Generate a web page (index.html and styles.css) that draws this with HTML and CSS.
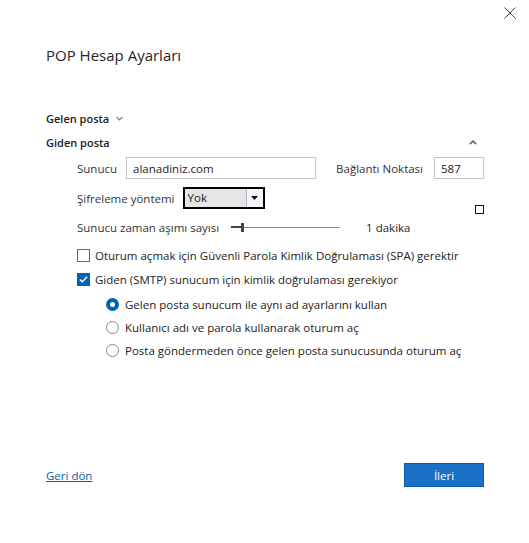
FILE: index.html
```html
<!DOCTYPE html>
<html lang="tr">
<head>
    <meta charset="UTF-8">
    <meta name="viewport" content="width=device-width, initial-scale=1.0">
    <title>POP Hesap Ayarları</title>
    <link rel="stylesheet" href="styles.css">
</head>
<body>
    <div class="dialog">
        <div class="topbar">
            <button class="close" aria-label="Kapat">
                <svg width="12" height="12" viewBox="0 0 12 12"><path d="M0.5 0.5 L11.5 11.5 M11.5 0.5 L0.5 11.5" stroke="#444" stroke-width="1" fill="none"/></svg>
            </button>
        </div>

        <div class="content">
            <h1 class="title">POP Hesap Ayarları</h1>

            <div class="section-head">
                <span>Gelen posta</span>
                <svg class="chev" width="7" height="5" viewBox="0 0 7 5"><path d="M0.5 0.8 L3.5 3.8 L6.5 0.8" stroke="#777" stroke-width="1.2" fill="none"/></svg>
            </div>
            <div class="section-head open">
                <span>Giden posta</span>
                <svg class="caret" width="8" height="5" viewBox="0 0 8 5"><path d="M0.8 4.2 L4 1.2 L7.2 4.2" stroke="#666" stroke-width="1.6" fill="none"/></svg>
            </div>

            <div class="row server-row">
                <label class="lbl" for="server">Sunucu</label>
                <input class="field server" id="server" type="text" value="alanadiniz.com">
                <label class="lbl port-lbl" for="port">Bağlantı Noktası</label>
                <input class="field port" id="port" type="text" value="587">
            </div>

            <div class="row enc-row">
                <span class="lbl">Şifreleme yöntemi</span>
                <div class="dropdown">
                    <span class="dropdown-value">Yok</span>
                    <span class="dropdown-arrow">
                        <svg width="7" height="4" viewBox="0 0 7 4"><path d="M0 0 H7 L3.5 4 Z" fill="#111"/></svg>
                    </span>
                </div>
                <span class="grip"></span>
            </div>

            <div class="row timeout-row">
                <span class="lbl">Sunucu zaman aşımı sayısı</span>
                <div class="slider">
                    <span class="slider-fill"></span>
                    <span class="slider-thumb"></span>
                    <span class="slider-track"></span>
                </div>
                <span class="slider-value">1 dakika</span>
            </div>

            <label class="row check-row">
                <span class="checkbox"></span>
                Oturum açmak için Güvenli Parola Kimlik Doğrulaması (SPA) gerektir
            </label>
            <label class="row check-row">
                <span class="checkbox checked">
                    <svg width="9" height="7" viewBox="0 0 9 7"><path d="M0.8 3.4 L3.3 5.8 L8.2 0.8" stroke="#fff" stroke-width="1.4" fill="none"/></svg>
                </span>
                Giden (SMTP) sunucum için kimlik doğrulaması gerekiyor
            </label>

            <div class="radios">
                <label class="row radio-row"><span class="radio checked"></span>Gelen posta sunucum ile aynı ad ayarlarını kullan</label>
                <label class="row radio-row"><span class="radio"></span>Kullanıcı adı ve parola kullanarak oturum aç</label>
                <label class="row radio-row"><span class="radio"></span>Posta göndermeden önce gelen posta sunucusunda oturum aç</label>
            </div>

            <div class="footer">
                <a class="back" href="#">Geri dön</a>
                <button class="next">İleri</button>
            </div>
        </div>
    </div>
</body>
</html>
```

FILE: styles.css
```css
body {
    margin: 0;
    background: #fff;
    font-family: "Open Sans", "Noto Sans", sans-serif;
    font-size: 11.5px;
    color: #222;
}

.dialog {
    width: 529px;
    height: 543px;
    display: flex;
    flex-direction: column;
}

.topbar {
    height: 26px;
    display: flex;
    justify-content: flex-end;
    align-items: center;
    padding-right: 13px;
}

.close {
    border: none;
    background: none;
    padding: 0;
    width: 12px;
    height: 12px;
    display: flex;
}

.content {
    flex: 1;
    display: flex;
    flex-direction: column;
    padding: 0 45px 0 46px;
}

.title {
    margin: 17px 0 0;
    font-size: 15px;
    line-height: 24px;
    font-weight: normal;
    color: #262626;
}

.section-head {
    height: 24px;
    display: flex;
    align-items: center;
    font-weight: 600;
    font-size: 11px;
    color: #222;
}

.section-head:first-of-type {
    margin-top: 39px;
}

.chev {
    margin-left: 7px;
    margin-top: 1px;
}

.section-head.open {
    justify-content: space-between;
    padding-right: 7px;
}

.row {
    display: flex;
    align-items: center;
}

.lbl {
    color: #333;
}

.server-row {
    margin-top: 3px;
    height: 22px;
    padding-left: 31px;
}

.field {
    box-sizing: border-box;
    height: 22px;
    border: 1px solid #c4c4c4;
    font: inherit;
    color: #222;
    padding: 0 6px;
    outline: none;
}

.server {
    width: 190px;
    margin-left: 9px;
}

.port-lbl {
    margin-left: auto;
}

.port {
    width: 50px;
    margin-left: 11px;
}

.enc-row {
    margin-top: 8px;
    height: 22px;
    padding-left: 31px;
}

.dropdown {
    box-sizing: border-box;
    margin-left: 8px;
    width: 82px;
    height: 22px;
    border: 2px solid #000;
    display: flex;
    background: #e5e5e5;
}

.dropdown-value {
    flex: 1;
    padding-left: 3px;
    line-height: 18px;
}

.dropdown-arrow {
    width: 16px;
    border-left: 1px solid #b5b5b5;
    background: #f2f5f9;
    display: flex;
    align-items: center;
    justify-content: center;
}

.grip {
    margin-left: auto;
    align-self: flex-end;
    margin-bottom: -5px;
    box-sizing: border-box;
    width: 9px;
    height: 9px;
    border: 1px solid #111;
}

.timeout-row {
    margin-top: 8px;
    height: 20px;
    padding-left: 31px;
}

.slider {
    margin-left: 12px;
    width: 109px;
    height: 9px;
    display: flex;
    align-items: center;
}

.slider-fill {
    width: 10px;
    height: 2px;
    background: #444;
}

.slider-thumb {
    width: 3px;
    height: 9px;
    background: #444;
}

.slider-track {
    flex: 1;
    height: 1px;
    background: #8a8a8a;
}

.slider-value {
    margin-left: 26px;
}

.check-row {
    height: 24px;
    padding-left: 31px;
}

.timeout-row + .check-row {
    margin-top: 6px;
}

.checkbox {
    box-sizing: border-box;
    width: 13px;
    height: 13px;
    border: 1px solid #666;
    margin-right: 5px;
    display: flex;
    align-items: center;
    justify-content: center;
}

.checkbox.checked {
    background: #0063b1;
    border-color: #0063b1;
}

.radios {
    margin-top: 2px;
    padding-left: 60px;
}

.radio-row {
    height: 23px;
}

.radio {
    box-sizing: border-box;
    width: 13px;
    height: 13px;
    border: 1px solid #888;
    border-radius: 50%;
    margin-right: 6px;
}

.radio.checked {
    border: 4px solid #0063b1;
}

.footer {
    margin-top: auto;
    margin-bottom: 56px;
    display: flex;
    justify-content: space-between;
    align-items: center;
}

.back {
    color: #0063b1;
    text-decoration: underline;
}

.next {
    width: 80px;
    height: 24px;
    border: 1px solid #0b5aa8;
    background: #1a6fc6;
    color: #fff;
    font: inherit;
    padding: 0;
}
```
